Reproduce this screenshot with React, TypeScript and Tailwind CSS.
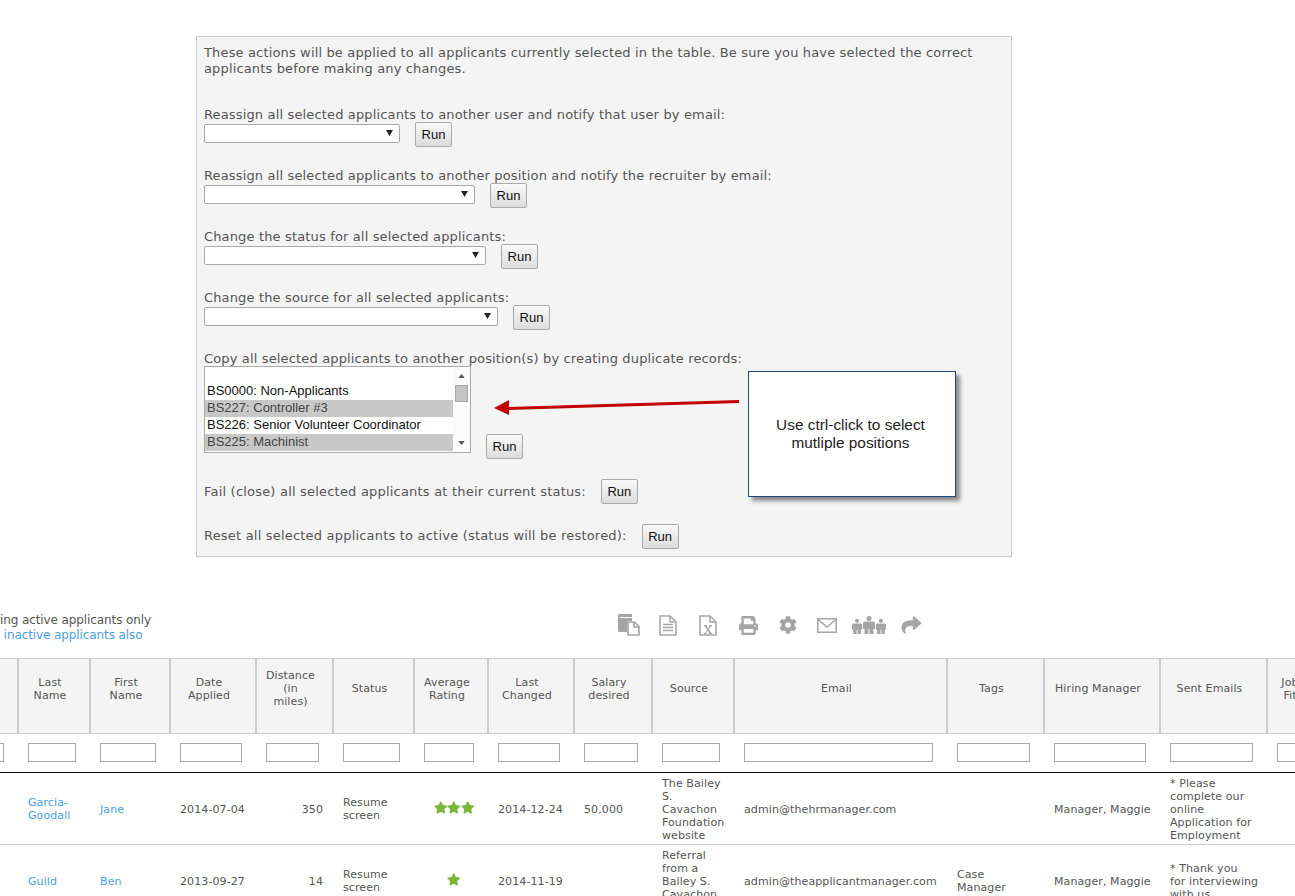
import { FaCog, FaPrint, FaShare, FaStar } from "react-icons/fa";

const VERDANA = "[font-family:'DejaVu_Sans',Verdana,sans-serif]";
const ARIAL = "[font-family:'Liberation_Sans',Arial,sans-serif]";

function RunButton() {
  return (
    <button
      type="button"
      className={`h-[25px] w-[37px] shrink-0 rounded-[2px] border border-[#aaaaaa] bg-gradient-to-b from-[#f8f8f8] to-[#dddddd] text-[13px] tracking-normal text-[#111111] ${ARIAL}`}
    >
      Run
    </button>
  );
}

function FakeSelect({ width }: { width: string }) {
  return (
    <div className={`relative mt-[2px] h-[19px] rounded-[2px] border border-[#aaaaaa] bg-white ${width}`}>
      <svg viewBox="0 0 8 7" className="absolute right-[6px] top-[5px] h-[6px] w-[7px]">
        <path d="M0 0h8L4 7z" fill="#222222" />
      </svg>
    </div>
  );
}

function ActionRow({ label, width, className }: { label: string; width: string; className?: string }) {
  return (
    <div className={className}>
      <p className="translate-y-px">{label}</p>
      <div className="flex items-start gap-[15px]">
        <FakeSelect width={width} />
        <RunButton />
      </div>
    </div>
  );
}

function PositionList() {
  const rows = [
    { text: "", on: false, h: "h-[16px]" },
    { text: "BS0000: Non-Applicants", on: false, h: "h-[17px]" },
    { text: "BS227: Controller #3", on: true, h: "h-[17px]" },
    { text: "BS226: Senior Volunteer Coordinator", on: false, h: "h-[17px]" },
    { text: "BS225: Machinist", on: true, h: "h-[17px]" },
  ];
  return (
    <div className={`flex h-[87px] w-[267px] border border-[#aaaaaa] bg-white text-[13px] leading-[15px] tracking-normal ${ARIAL}`}>
      <div className="w-[248px]">
        {rows.map((row) => (
          <div
            key={row.text || "empty"}
            className={`px-[2px] ${row.h} ${row.on ? "bg-[#c8c8c8] text-[#444444]" : "text-[#111111]"}`}
          >
            {row.text}
          </div>
        ))}
      </div>
      <div className="relative flex-1 bg-[#fbfbfb]">
        <svg viewBox="0 0 8 5" className="absolute left-[5px] top-[7px] h-[4px] w-[7px]">
          <path d="M4 0l4 5H0z" fill="#555555" />
        </svg>
        <div className="absolute left-[2px] top-[18px] h-[17px] w-[13px] border border-[#a8a8a8] bg-[#c4c4c4]" />
        <svg viewBox="0 0 8 5" className="absolute bottom-[7px] left-[5px] h-[4px] w-[7px]">
          <path d="M0 0h8L4 5z" fill="#555555" />
        </svg>
      </div>
    </div>
  );
}

function ActionsPanel() {
  return (
    <div className={`relative ml-[196px] mt-9 w-[816px] border border-[#cccccc] bg-[#f4f4f4] px-[7px] pb-[7px] pt-[7px] text-[13px] leading-4 tracking-[0.15px] text-[#555555] ${VERDANA}`}>
      <p className="translate-y-px">
        These actions will be applied to all applicants currently selected in the table. Be sure you have selected the
        correct applicants before making any changes.
      </p>

      <ActionRow className="mt-[30px]" label="Reassign all selected applicants to another user and notify that user by email:" width="w-[196px]" />
      <ActionRow className="mt-5" label="Reassign all selected applicants to another position and notify the recruiter by email:" width="w-[271px]" />
      <ActionRow className="mt-5" label="Change the status for all selected applicants:" width="w-[282px]" />
      <ActionRow className="mt-5" label="Change the source for all selected applicants:" width="w-[294px]" />

      <div className="mt-5">
        <p className="translate-y-px">Copy all selected applicants to another position(s) by creating duplicate records:</p>
        <div className="flex items-end gap-[15px]">
          <div className="mb-[6px]">
            <PositionList />
          </div>
          <RunButton />
        </div>
      </div>

      <div className="mt-5 flex items-center gap-[15px]">
        <span className="tracking-[0.2px]">Fail (close) all selected applicants at their current status:</span>
        <RunButton />
      </div>
      <div className="mt-5 flex items-center gap-[15px]">
        <span className="pb-[2px] tracking-[0.2px]">Reset all selected applicants to active (status will be restored):</span>
        <RunButton />
      </div>

      {/* callout + arrow sit on top of the form */}
      <svg viewBox="0 0 246 16" className="absolute left-[297px] top-[362px] h-[16px] w-[246px]">
        <path d="M245 1L14 8l.1 3L245 4z" fill="#c00000" />
        <path d="M0 9L15 1v15z" fill="#c00000" />
      </svg>
      <div className={`absolute left-[551px] top-[334px] flex h-[126px] w-[208px] items-center justify-center border border-[#1f497d] bg-white pr-[3px] text-center text-[15.4px] leading-[18px] tracking-normal text-[#222222] shadow-[4px_4px_4px_#8a8a8a] ${ARIAL}`}>
        <p>
          Use ctrl-click to select
          <br />
          mutliple positions
        </p>
      </div>
    </div>
  );
}

function CopyIcon() {
  return (
    <svg viewBox="0 0 22 22" className="h-[22px] w-[22px]">
      <path d="M0 1.500A1.500 1.500 0 0 1 1.500 0H14v3H2v1h12v3H9v11H1.500A1.500 1.500 0 0 1 0 16.500z" fill="#a5a5a5" />
      <path d="M10 8h6.500L21 12.500V21H10z" fill="#fff" stroke="#a5a5a5" strokeWidth="1.600" />
      <path d="M16 8v5h5" fill="none" stroke="#a5a5a5" strokeWidth="1.600" />
    </svg>
  );
}

function DocIcon({ excel }: { excel?: boolean }) {
  return (
    <svg viewBox="0 0 18 21" className="h-[21px] w-[18px]">
      <path d="M1 1h10l6 6v13H1z" fill="#fff" stroke="#a5a5a5" strokeWidth="1.500" />
      <path d="M11 1v6h6" fill="none" stroke="#a5a5a5" strokeWidth="1.500" />
      {excel ? (
        <path d="M5 10h3v1l-.6.2L9 13.300l1.600-2.100L10 11v-1h3v1l-1 .3-2.300 3 2.500 3.400 1 .3v1H9.500v-1l.6-.2L8.700 15.800 7 17.700l.8.300v1H5v-1l1-.3 2.200-2.900L5.800 11.300 5 11z" fill="#a5a5a5" />
      ) : (
        <path d="M4 9.500h10M4 12.500h10M4 15.500h10" stroke="#a5a5a5" strokeWidth="1.500" />
      )}
    </svg>
  );
}

function EnvelopeIcon() {
  return (
    <svg viewBox="0 0 20 15" className="h-[15px] w-[20px]">
      <rect x="0.800" y="0.800" width="18.400" height="13.400" fill="#fff" stroke="#a5a5a5" strokeWidth="1.500" />
      <path d="M1 1.500l9 7.500 9-7.500" fill="none" stroke="#a5a5a5" strokeWidth="1.500" />
    </svg>
  );
}

function Person({ x, y, scale }: { x: number; y: number; scale: number }) {
  return (
    <g transform={`translate(${x} ${y}) scale(${scale})`} fill="#a5a5a5">
      <circle cx="6" cy="2.500" r="2.500" />
      <path d="M2 5.500h8a2 2 0 0 1 2 2v5.500h-1.500v5H6.500v-5h-1v5H1.500v-5H0V7.500a2 2 0 0 1 2-2z" />
    </g>
  );
}

function PeopleIcon() {
  return (
    <svg viewBox="0 0 34 18" className="h-[18px] w-[34px]">
      <Person x={0} y={2.700} scale={0.85} />
      <Person x={11} y={0} scale={1} />
      <Person x={23.800} y={2.700} scale={0.85} />
    </svg>
  );
}

function Toolbar() {
  return (
    <div className="mt-[56px] flex h-[45px] items-start">
      <div className={`-ml-[32px] w-[650px] text-[12px] leading-[15px] tracking-[-0.1px] text-[#555555] ${VERDANA}`}>
        <p>Showing active applicants only</p>
        <p className="text-[#4a9ede]">Show inactive applicants also</p>
      </div>
      <div className="flex h-[24px] items-center text-[#a5a5a5]">
        <CopyIcon />
        <span className="ml-[19px]"><DocIcon /></span>
        <span className="ml-[22px]"><DocIcon excel /></span>
        <FaPrint className="ml-[22px] h-[19px] w-[19px]" />
        <FaCog className="ml-[21px] h-[18px] w-[18px]" />
        <span className="ml-[20px]"><EnvelopeIcon /></span>
        <span className="ml-[15px]"><PeopleIcon /></span>
        <FaShare className="ml-[15px] h-[20px] w-[21px]" />
      </div>
    </div>
  );
}

const COLUMNS = [
  { title: "", w: "w-[60px]" },
  { title: "Last Name", w: "w-[72px]" },
  { title: "First Name", w: "w-[80px]" },
  { title: "Date Applied", w: "w-[86px]" },
  { title: "Distance (in miles)", w: "w-[77px]" },
  { title: "Status", w: "w-[81px]" },
  { title: "Average Rating", w: "w-[74px]" },
  { title: "Last Changed", w: "w-[86px]" },
  { title: "Salary desired", w: "w-[78px]" },
  { title: "Source", w: "w-[82px]" },
  { title: "Email", w: "w-[213px]" },
  { title: "Tags", w: "w-[97px]" },
  { title: "Hiring Manager", w: "w-[116px]" },
  { title: "Sent Emails", w: "w-[107px]" },
  { title: "Job Fit", w: "w-[52px]" },
];

const APPLICANTS = [
  {
    last: "Garcia-Goodall",
    first: "Jane",
    applied: "2014-07-04",
    distance: "350",
    status: "Resume screen",
    stars: 3,
    changed: "2014-12-24",
    salary: "50,000",
    source: "The Bailey S. Cavachon Foundation website",
    email: "admin@thehrmanager.com",
    tags: "",
    manager: "Manager, Maggie",
    sent: ["* Please", "complete our", "online", "Application for", "Employment"],
  },
  {
    last: "Guild",
    first: "Ben",
    applied: "2013-09-27",
    distance: "14",
    status: "Resume screen",
    stars: 1,
    changed: "2014-11-19",
    salary: "",
    source: "Referral from a Bailey S. Cavachon website",
    email: "admin@theapplicantmanager.com",
    tags: "Case Manager",
    manager: "Manager, Maggie",
    sent: ["* Thank you", "for interviewing", "with us"],
  },
];

// two-line cells sit half a pixel higher than one- or five-line ones in the original
const cellEven = "border-b border-[#cccccc] pl-[9px] pr-[12px] py-[3px] align-middle";
const cellOdd = "border-b border-[#cccccc] pl-[9px] pr-[12px] pb-[2px] pt-[4px] align-middle";

function ApplicantTable() {
  return (
    <table className={`-ml-[41px] w-[1361px] table-fixed border-separate border-spacing-0 text-[11px] leading-[13px] tracking-[0.1px] text-[#555555] ${VERDANA}`}>
      <colgroup>
        {COLUMNS.map((col) => (
          <col key={col.title} className={col.w} />
        ))}
      </colgroup>
      <thead>
        <tr className="h-[76px]">
          {COLUMNS.map((col, i) => (
            <th
              key={col.title}
              className={`border-b border-t border-[#cccccc] bg-[#f4f4f4] pb-[15px] pl-[9px] pr-[17px] text-center font-normal ${i < COLUMNS.length - 1 ? "border-r-2" : ""}`}
            >
              {col.title}
            </th>
          ))}
        </tr>
        <tr>
          {COLUMNS.map((col) => (
            <td key={col.title} className="border-b border-black pb-[10px] pl-[9px] pr-[15px] pt-[9px]">
              <input type="text" aria-label={col.title || "Select"} className="block h-[19px] w-full border border-[#aaaaaa] bg-white" />
            </td>
          ))}
        </tr>
      </thead>
      <tbody>
        {APPLICANTS.map((a) => (
          <tr key={a.email} className="h-[72px]">
            <td className="border-b border-[#cccccc]" />
            <td className={`${a.last.includes("-") ? cellEven : cellOdd} text-[#4a9ede]`}>{a.last}</td>
            <td className={`${cellOdd} text-[#4a9ede]`}>{a.first}</td>
            <td className={`${cellOdd} whitespace-nowrap`}>{a.applied}</td>
            <td className="border-b border-[#cccccc] pb-[2px] pr-[11px] pt-[4px] text-right align-middle">{a.distance}</td>
            <td className={cellEven}>{a.status}</td>
            <td className="border-b border-[#cccccc] pb-[2px] pl-[9px] pr-[5px] align-middle">
              <div className="flex justify-center text-[#7ab83c]">
                {Array.from({ length: a.stars }).map((_, i) => (
                  <FaStar key={i} className="h-[13px] w-[13.500px]" />
                ))}
              </div>
            </td>
            <td className={`${cellOdd} whitespace-nowrap`}>{a.changed}</td>
            <td className={cellOdd}>{a.salary}</td>
            <td className={cellOdd}>{a.source}</td>
            <td className={`${cellOdd} whitespace-nowrap`}>{a.email}</td>
            <td className={cellEven}>{a.tags}</td>
            <td className={`${cellOdd} whitespace-nowrap`}>{a.manager}</td>
            <td className={`${cellOdd} whitespace-nowrap`}>
              {a.sent.map((line) => (
                <div key={line}>{line}</div>
              ))}
            </td>
            <td className="border-b border-[#cccccc]" />
          </tr>
        ))}
      </tbody>
    </table>
  );
}

export default function App() {
  return (
    <div className="h-[896px] w-[1295px] overflow-hidden bg-white">
      <ActionsPanel />
      <Toolbar />
      <ApplicantTable />
    </div>
  );
}
